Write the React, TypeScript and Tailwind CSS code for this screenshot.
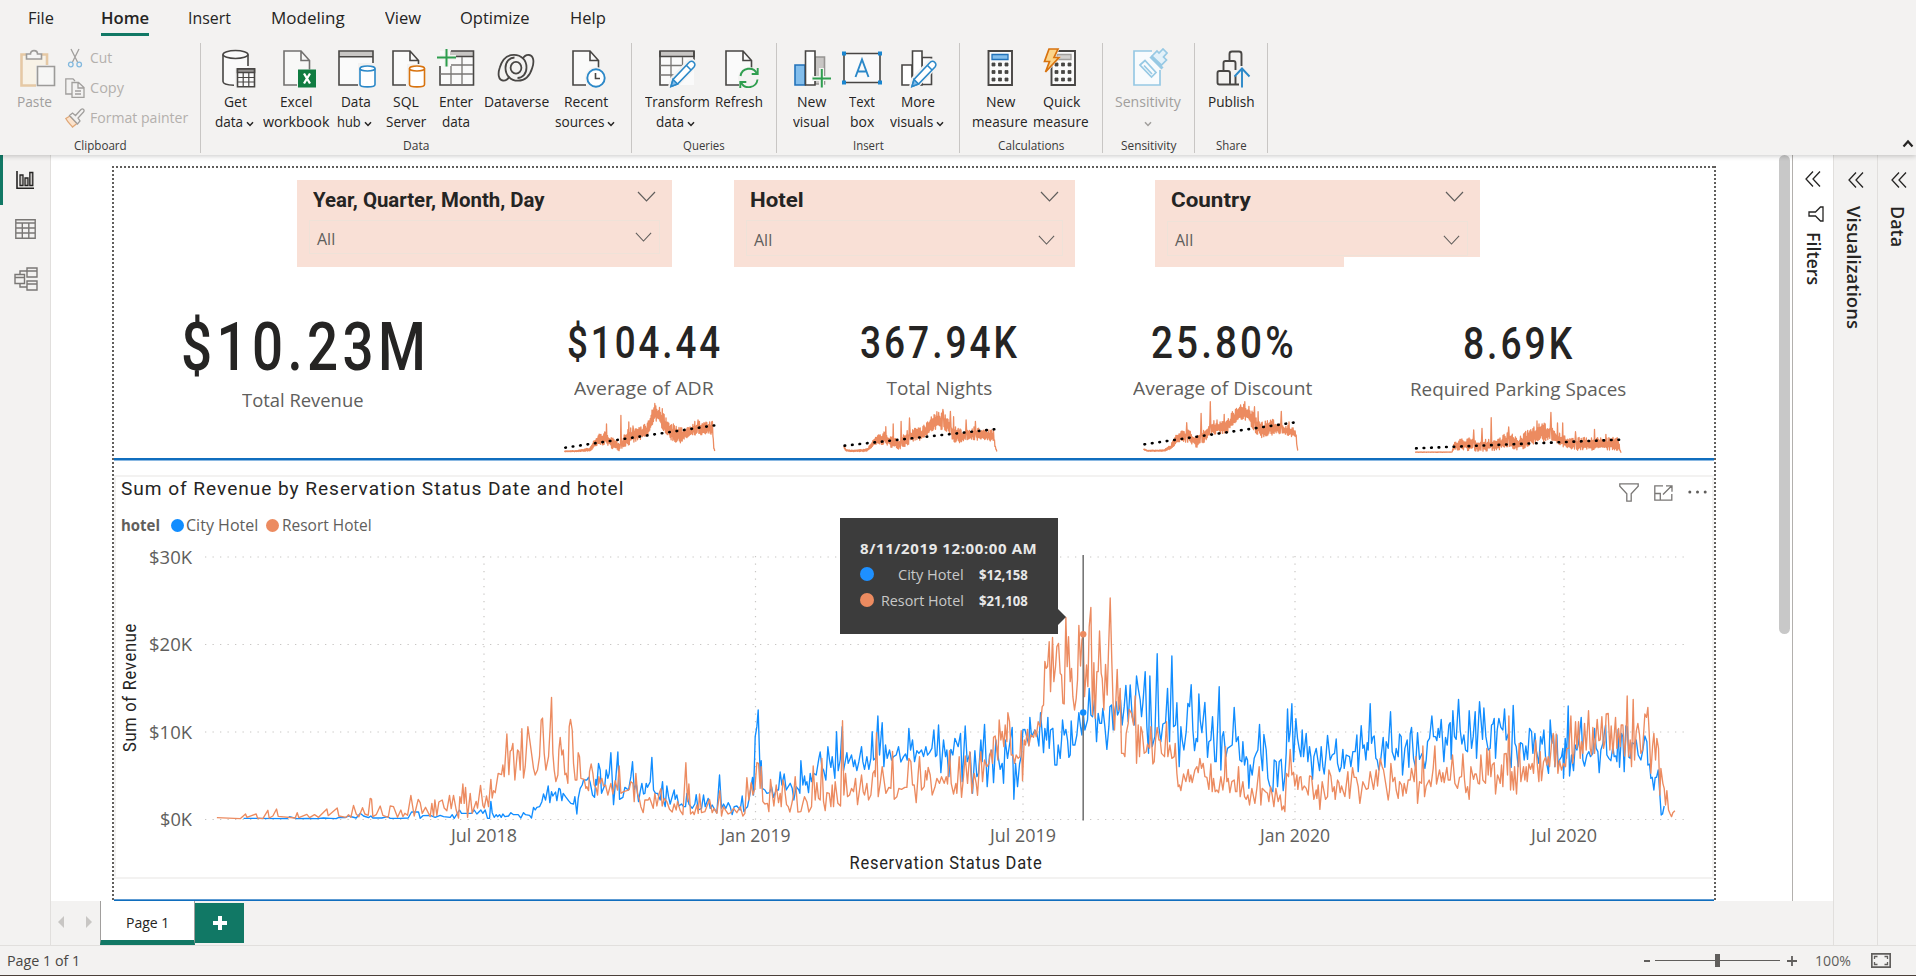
import { useLayoutEffect, useRef, useState } from "react";
import type { ReactNode } from "react";

const UI = "font-['Open_Sans','Noto_Sans',sans-serif]";
const DIN = "font-[Roboto,'Liberation_Sans',sans-serif]";

/* One line of text, condensed or widened so that it fills the width of its box. */
function Fit({ className, children }: { className: string; children: string }) {
  const box = useRef<HTMLSpanElement>(null);
  const inner = useRef<HTMLSpanElement>(null);
  const [scale, setScale] = useState(1);
  useLayoutEffect(() => {
    if (box.current && inner.current && inner.current.offsetWidth) {
      setScale(box.current.clientWidth / inner.current.offsetWidth);
    }
  }, [children]);
  return (
    <span ref={box} className={`block shrink-0 text-left ${className}`}>
      <span
        ref={inner}
        className="inline-block origin-left whitespace-nowrap"
        style={{ transform: `scaleX(${scale})` }}
      >
        {children}
      </span>
    </span>
  );
}

/* ---------- ribbon icons ---------- */
const D = "#484644";

function Box({ children, faded }: { children: ReactNode; faded?: boolean }) {
  return (
    <svg viewBox="0 0 40 40" className={faded ? "size-10 opacity-50" : "size-10"} fill="none" stroke={D} strokeWidth="1.6">
      {children}
    </svg>
  );
}
const Cylinder = ({ x, y, w, h, c }: { x: number; y: number; w: number; h: number; c: string }) => (
  <g stroke={c}>
    <path d={`M${x} ${y + 2.5}v${h - 5}c0 3.2 ${w} 3.2 ${w} 0v${-(h - 5)}`} fill="#fff" />
    <ellipse cx={x + w / 2} cy={y + 2.5} rx={w / 2} ry="2.5" fill="#fff" />
  </g>
);
const Sheet = ({ x = 0 }: { x?: number }) => (
  <g>
    <path d={`M${x + 7} 3h17l9 9v25h-26z`} fill="#fafafa" stroke="none" />
    <path d={`M${x + 20} 37h-13v-34h17l8.500 9.500v9M${x + 24} 3v9.500h8.500`} />
  </g>
);
const Pencil = () => (
  <g>
    <path d="M13 39l2-8 16-17a3.500 3.500 0 0 1 6 5L20 37z" fill="#fff" stroke="#f3f2f1" strokeWidth="4" />
    <path d="M14 38.500l2-7 16-17a3.200 3.200 0 0 1 5 4.500L20.500 36z" fill="#fff" stroke="#2b88c8" />
    <path d="M14 38.500l2-7 4.500 4.500z" fill="#83beec" stroke="#2b88c8" />
    <path d="M29.500 17.500l4.500 4.500" stroke="#2b88c8" />
  </g>
);

const PasteIcon = () => (
  <Box faded>
    <path d="M9 6.500H4.500v31H19M25 6.500h5V17" stroke="#dba15a" strokeWidth="2.600" />
    <path d="M6 8h22v9h-9v19H6z" fill="#fdf3dc" stroke="none" />
    <path d="M9.500 11V6h4c0-4.500 7-4.500 7 0h4v5z" fill="#f8f8f8" />
    <path d="M20.500 18.500h17v19h-17z" fill="#fafafa" />
  </Box>
);
const GetDataIcon = () => (
  <Box>
    <path d="M7 6.500v27c0 2 5 3.800 12 3.800V20h13V6.500z" fill="#fafafa" stroke="none" />
    <path d="M7 6.500v27c0 2 4 3.500 11 3.800M32 6.500V18" />
    <ellipse cx="19.500" cy="6.500" rx="12.500" ry="4" fill="#fafafa" />
    <path d="M21.500 20.800h17v18h-17z" fill="#fafafa" />
    <path d="M21.500 21h17v3.500h-17z" fill="#979593" />
    <path d="M21.500 29.500h17M21.500 34h17M27.200 24.500v14M32.800 24.500v14" strokeWidth="1.200" />
  </Box>
);
const ExcelIcon = () => (
  <Box>
    <g opacity="0.75"><Sheet x={1} /></g>
    <path d="M22 21.500h18v18H22z" fill="#107c41" stroke="none" />
    <path d="M28 25.500l6 10M34 25.500l-6 10" stroke="#fff" strokeWidth="2.300" />
  </Box>
);
const DataHubIcon = () => (
  <Box>
    <path d="M3 3h34v34H3z" fill="#fafafa" stroke="none" />
    <path d="M3 3.500h34v5H3z" fill="#c8c6c4" stroke="none" />
    <path d="M22 37H3V3h34v12M3 8.800h34" />
    <path d="M22 15h19v26H22z" fill="#f3f2f1" stroke="none" />
    <Cylinder x={24} y={18} w={15} h={21} c="#2b88c8" />
  </Box>
);
const SqlIcon = () => (
  <Box>
    <Sheet />
    <path d="M21 16h19v25H21z" fill="#f3f2f1" stroke="none" />
    <Cylinder x={23.500} y={18} w={15} h={21} c="#d8730f" />
  </Box>
);
const EnterDataIcon = () => (
  <Box>
    <path d="M4 3h34v34H4z" fill="#fafafa" stroke="none" />
    <path d="M14 3h24v5H14z" fill="#c8c6c4" stroke="none" />
    <path d="M15 3h22.500v34H4V18M18 8.500h19.500" />
    <path d="M4 26h33M15 17h22M15 18v19M26 9v28" stroke="#797775" strokeWidth="1.300" />
    <path d="M1 9.500h19M10.500 0v19" stroke="#f3f2f1" strokeWidth="5" />
    <path d="M1 9.500h19M10.500 1v17.500" stroke="#2f9e4f" strokeWidth="2" />
  </Box>
);
const DataverseIcon = () => (
  <Box>
    <g strokeWidth="1.800">
      <path d="M13.500 28.500C12 31 9.500 32.800 7 32.500 2.500 32 1.500 26 3.800 19.500 6 12 11 6.800 18 6.800c7.500 0 12.500 5.500 12.500 12.700 0 6.500-4 10.500-9 10.500" />
      <path d="M26.500 11C28 8.500 30.500 6.700 33 7c4.500.5 5.500 6.500 3.200 13C34 27.500 29 32.700 22 32.700 14.500 32.700 9.500 27.200 9.500 20c0-6.500 4-10.500 9-10.500" />
      <ellipse cx="20" cy="19.700" rx="5.400" ry="5.900" />
    </g>
  </Box>
);
const RecentIcon = () => (
  <Box>
    <Sheet />
    <circle cx="30" cy="30" r="11" fill="#f3f2f1" stroke="none" />
    <circle cx="30" cy="30" r="8.700" fill="#fff" stroke="#2b88c8" strokeWidth="1.900" />
    <path d="M29.500 25v5.500h4.500" />
  </Box>
);
const TransformIcon = () => (
  <Box>
    <path d="M3 3h34v34H3z" fill="#fafafa" stroke="none" />
    <path d="M3 3h34v5.500H3z" fill="#c8c6c4" />
    <path d="M3 3v34h12M37 3v11" />
    <path d="M3 17.500h30M3 27h20M14 9v25M25.500 9v14" stroke="#797775" strokeWidth="1.300" />
    <Pencil />
  </Box>
);
const RefreshIcon = () => (
  <Box>
    <Sheet />
    <circle cx="30" cy="30" r="11" fill="#f3f2f1" stroke="none" />
    <g stroke="#2f9e4f" strokeWidth="1.900">
      <path d="M21.500 28a8.800 8.800 0 0 1 16.500-2.500M38.500 31.500A8.800 8.800 0 0 1 22 34.500" />
      <path d="M38.700 20v6h-6M21.300 40v-6h6" />
    </g>
  </Box>
);
const NewVisualIcon = () => (
  <Box>
    <path d="M24 9h9.500v27H24z" fill="#c8c6c4" stroke="#979593" />
    <path d="M4 17h10v20H4z" fill="#83beec" stroke="#2272b9" />
    <path d="M14.500 3h9.500v34h-9.500z" fill="#fff" />
    <path d="M21 30.500h19M30.500 20v19" stroke="#f3f2f1" strokeWidth="5" />
    <path d="M21.500 30.500h18.500M30.800 21v18.500" stroke="#2f9e4f" strokeWidth="2" />
  </Box>
);
const TextBoxIcon = () => (
  <Box>
    <path d="M2 5.500h36v29H2z" fill="#fafafa" />
    <path d="M13.500 29L20 11.500 26.500 29M15.500 23.500h9" stroke="#2b88c8" strokeWidth="1.900" />
    <path d="M0 3.500h4v4H0zM36 3.500h4v4h-4zM0 32.500h4v4H0zM36 32.500h4v4h-4z" fill="#1a86d0" stroke="none" />
  </Box>
);
const MoreVisualsIcon = () => (
  <Box>
    <path d="M24 9.500h9.500v27H24z" fill="#fafafa" />
    <path d="M4 17h10v20H4z" fill="#fff" />
    <path d="M14.500 3h9.500v34h-9.500z" fill="#fff" />
    <Pencil />
  </Box>
);
const Keys = () => (
  <path d="M12 15h3v3h-3zM18.500 15h3v3h-3zM25 15h3v3h-3zM12 22.500h3v3h-3zM18.500 22.500h3v3h-3zM25 22.500h3v3h-3zM12 30h3v3h-3zM18.500 30h3v3h-3zM25 30h3v3h-3z" fill={D} stroke={D} strokeWidth="0.800" />
);
const NewMeasureIcon = () => (
  <Box>
    <path d="M8.500 3h23.500v34H8.500z" fill="#fafafa" strokeWidth="1.900" />
    <path d="M12 6.500h16v5H12z" fill="#83beec" stroke="#2272b9" strokeWidth="1.300" />
    <Keys />
  </Box>
);
const QuickMeasureIcon = () => (
  <Box>
    <g transform="translate(2 0)">
      <path d="M8.500 3h23.500v34H8.500z" fill="#fafafa" strokeWidth="1.900" />
      <path d="M14 6.500h14v5H14z" fill="#d2d0ce" stroke="#a19f9d" strokeWidth="1.300" />
      <Keys />
    </g>
    <path d="M6 0h13l-4 8.500h5L5 26l3-11H0z" fill="#f3f2f1" stroke="none" />
    <path d="M8 1h9l-4 8.500h5L4.500 24l4-10.500H3.500z" fill="#fcd58a" stroke="#d8730f" strokeWidth="1.700" />
  </Box>
);
const SensitivityIcon = () => (
  <Box>
    <g stroke="#97c9e4" strokeWidth="1.700">
      <path d="M32 22v15H6V3h18" fill="#f8fbfd" />
      <path d="M24 8l5-5 2 2 4-4 4 4-3.500 4 3 3-5 5z" fill="#e3f1f9" />
      <path d="M22.500 8.500l12 12" strokeWidth="3" />
      <path d="M12 17l5-4.500L28 24.500 23.500 29z" />
      <path d="M16 17.500l8 8.500" />
    </g>
  </Box>
);
const PublishIcon = () => (
  <Box>
    <g strokeWidth="1.900">
      <path d="M30.500 18V6a2.500 2.500 0 0 0-2.500-2.500h-7A2.500 2.500 0 0 0 18.500 6v7" />
      <path d="M24.500 22v-7a2 2 0 0 0-2-2h-8a2 2 0 0 0-2 2v7.500" />
      <path d="M19 36.500V25a2 2 0 0 0-2-2H8.500a2 2 0 0 0-2 2v9.500a2 2 0 0 0 2 2H28M24.500 28v8.500" />
    </g>
    <path d="M31 39.500V21M23.500 28.500l7.500-8 7.500 8" stroke="#2b88c8" strokeWidth="1.900" />
  </Box>
);

const Caret = ({ className = "" }: { className?: string }) => (
  <svg viewBox="0 0 8 6" className={`h-[6px] w-2 shrink-0 ${className}`} fill="none" stroke="currentColor" strokeWidth="1.500">
    <path d="M1 1.200L4 4.400 7 1.200" />
  </svg>
);

function Tool({ className, icon, a, aw, b, bw, caret, off }: {
  className: string; icon: ReactNode; a: string; aw: string; b?: string; bw?: string; caret?: boolean; off?: boolean;
}) {
  return (
    <div className={`flex shrink-0 flex-col items-center ${off ? "text-[#a19f9d]" : "text-[#252423]"} ${className}`}>
      {icon}
      <div className="mt-1 flex h-10 flex-col items-center text-[14.5px] leading-5">
        <Fit className={aw}>{a}</Fit>
        <div className="flex h-5 items-center gap-[3px]">
          {b && <Fit className={bw ?? ""}>{b}</Fit>}
          {caret && <Caret className={b ? "mt-1 mr-[3px]" : "mt-1"} />}
        </div>
      </div>
    </div>
  );
}

function Group({ className, pad = "", label, lw, children }: { className: string; pad?: string; label: string; lw: string; children: ReactNode }) {
  return (
    <div className={`flex h-[110px] shrink-0 flex-col border-r border-[#c8c6c4] pt-[5px] ${className}`}>
      <div className={`flex h-[91px] shrink-0 ${pad}`}>{children}</div>
      <div className="flex shrink-0 justify-center text-[12.5px] leading-[14px] text-[#3b3a39]"><Fit className={lw}>{label}</Fit></div>
    </div>
  );
}

function Ribbon() {
  return (
    <header className="relative z-10 flex h-[155px] shrink-0 flex-col bg-[#f3f2f1] shadow-[0_1px_5px_rgba(0,0,0,0.22)]">
      <nav className="flex h-[43px] pl-7 text-[17px] leading-9 text-[#252423]">
        <Fit className="w-[26px]">File</Fit>
        <div className="ml-[47px] flex flex-col">
          <Fit className="h-[33px] w-12 font-semibold">Home</Fit>
          <div className="h-[3px] bg-[#117865]" />
        </div>
        <Fit className="ml-[39px] w-[43px]">Insert</Fit>
        <Fit className="ml-10 w-[74px]">Modeling</Fit>
        <Fit className="ml-10 w-[36px]">View</Fit>
        <Fit className="ml-[39px] w-[70px]">Optimize</Fit>
        <Fit className="ml-10 w-[36px]">Help</Fit>
      </nav>
      <div className="flex">
        <Group className="w-[201px]" label="Clipboard" lw="w-[53px]">
          <div className="ml-[17px] flex w-10 flex-col text-[14.5px] leading-5 text-[#a19f9d]">
            <PasteIcon />
            <Fit className="mt-1 w-[35px]">Paste</Fit>
          </div>
          <div className="ml-2 flex flex-col text-[14.5px] text-[#b3b0ad]">
            <div className="flex h-5 items-center">
              <svg viewBox="0 0 20 20" className="size-5" fill="none" stroke="#a19f9d" strokeWidth="1.300">
                <path d="M6 1l6.500 13M14 1L7.500 14" />
                <circle cx="5.800" cy="16.500" r="2.300" stroke="#83b9de" /><circle cx="14.200" cy="16.500" r="2.300" stroke="#83b9de" />
              </svg>
              <Fit className="ml-[5px] w-[22px] leading-5">Cut</Fit>
            </div>
            <div className="mt-[10px] flex h-5 items-center">
              <svg viewBox="0 0 20 20" className="size-5" fill="none" stroke="#a19f9d" strokeWidth="1.300">
                <path d="M7 16H.8V.8H8L10 3M7 4.500h6.500l5.500 5v9.800H7zM13 4.500V10h6M10 13h6M10 16h6" />
              </svg>
              <Fit className="ml-[5px] w-[34px] leading-5">Copy</Fit>
            </div>
            <div className="mt-[10px] flex h-5 items-center">
              <svg viewBox="0 0 20 20" className="size-5" fill="none" stroke="#a19f9d" strokeWidth="1.300">
                <path d="M5 8l7 7.500-4.500 3.500C5 16 3 14.500.800 10.500z" fill="#fbe3cd" stroke="#e0a878" />
                <path d="M4.500 7.500l3-2.500 3 2.500L16 1.500c2-1.500 4 .5 2.500 2.500L13 10l2 3-2.500 3z" fill="#f3f2f1" />
              </svg>
              <Fit className="ml-[5px] w-[98px] leading-5">Format painter</Fit>
            </div>
          </div>
        </Group>
        <Group className="w-[431px]" pad="pl-2" label="Data" lw="w-[26px]">
          <Tool className="w-[53px]" icon={<GetDataIcon />} a="Get" aw="w-[23px]" b="data" bw="w-[28px]" caret />
          <Tool className="w-[68px]" icon={<ExcelIcon />} a="Excel" aw="w-[32px]" b="workbook" bw="w-[66px]" />
          <Tool className="w-[52px]" icon={<DataHubIcon />} a="Data" aw="w-[30px]" b="hub" bw="w-[24px]" caret />
          <Tool className="w-[48px]" icon={<SqlIcon />} a="SQL" aw="w-[26px]" b="Server" bw="w-[40px]" />
          <Tool className="w-[51px]" icon={<EnterDataIcon />} a="Enter" aw="w-[34px]" b="data" bw="w-[28px]" />
          <Tool className="w-[70px]" icon={<DataverseIcon />} a="Dataverse" aw="w-[65px]" />
          <Tool className="w-[70px]" icon={<RecentIcon />} a="Recent" aw="w-[44px]" b="sources" bw="w-[49px]" caret />
        </Group>
        <Group className="w-[145px]" pad="pl-[10px]" label="Queries" lw="w-[42px]">
          <Tool className="w-[70px]" icon={<TransformIcon />} a="Transform" aw="w-[65px]" b="data" bw="w-[28px]" caret />
          <Tool className="w-[54px]" icon={<RefreshIcon />} a="Refresh" aw="w-[48px]" />
        </Group>
        <Group className="w-[183px]" pad="pl-[12px]" label="Insert" lw="w-[31px]">
          <Tool className="w-[44px]" icon={<NewVisualIcon />} a="New" aw="w-[29px]" b="visual" bw="w-[36px]" />
          <Tool className="ml-[7px] w-[44px]" icon={<TextBoxIcon />} a="Text" aw="w-[26px]" b="box" bw="w-[24px]" />
          <Tool className="w-[68px]" icon={<MoreVisualsIcon />} a="More" aw="w-[34px]" b="visuals" bw="w-[43px]" caret />
        </Group>
        <Group className="w-[143px]" pad="pl-[10px]" label="Calculations" lw="w-[66px]">
          <Tool className="w-[60px]" icon={<NewMeasureIcon />} a="New" aw="w-[29px]" b="measure" bw="w-[56px]" />
          <Tool className="w-[62px]" icon={<QuickMeasureIcon />} a="Quick" aw="w-[37px]" b="measure" bw="w-[56px]" />
        </Group>
        <Group className="w-[92px]" pad="pl-[9px]" label="Sensitivity" lw="w-[55px]">
          <Tool className="w-[72px]" off icon={<SensitivityIcon />} a="Sensitivity" aw="w-[66px]" caret />
        </Group>
        <Group className="w-[73px]" pad="pl-[9px]" label="Share" lw="w-[31px]">
          <Tool className="w-[54px]" icon={<PublishIcon />} a="Publish" aw="w-[47px]" />
        </Group>
        <div className="flex flex-1 items-end justify-end pr-[2px] pb-[3px]">
          <svg viewBox="0 0 12 9" className="mb-[2px] h-[9px] w-3" fill="none" stroke="#252423" strokeWidth="2.200"><path d="M1.500 7.500L6 2.500l4.500 5" /></svg>
        </div>
      </div>
    </header>
  );
}

/* ---------- left navigation ---------- */
function ViewNav() {
  return (
    <nav className="flex w-[51px] shrink-0 flex-col border-r border-[#e1dfdd] bg-[#f3f2f1]">
      <div className="flex h-[50px] items-center border-l-[3px] border-[#117865] pl-[13px]">
        <svg viewBox="0 0 18 18" className="size-[18px]" fill="none" stroke="#252423" strokeWidth="1.300">
          <path d="M1 0v17.200h17" strokeWidth="1.600" />
          <path d="M4 4h3v10.500H4zM9 7h3v7.500H9zM13.800 1.500h3v13h-3z" fill="#c8c6c4" />
        </svg>
      </div>
      <div className="flex h-12 items-center pl-[15px]">
        <svg viewBox="0 0 21 20" className="h-5 w-[21px]" fill="none" stroke="#797775" strokeWidth="1.400">
          <path d="M.8.8h19.400v18.400H.8zM.8 4h19.400M.8 9h19.400M.8 14h19.400M7.300 4v15M13.800 4v15" />
        </svg>
      </div>
      <div className="mt-[2px] flex h-12 items-center pl-[14px]">
        <svg viewBox="0 0 24 24" className="size-6" fill="none" stroke="#797775" strokeWidth="1.400">
          <path d="M13 1h10v9H13zM13 4h10M13 14h10v9H13zM13 17h10M1 7.500h9.500v9H1zM1 10.500h9.500M6 7.500V4h7M6 16.500V20h7" />
        </svg>
      </div>
    </nav>
  );
}

/* ---------- slicers ---------- */
const Chevron = ({ className = "" }: { className?: string }) => (
  <svg viewBox="0 0 19 11" className={`shrink-0 ${className}`} fill="none" stroke="#605e5c" strokeWidth="1.200"><path d="M1 1l8.500 9L18 1" /></svg>
);

function Slicer({ className, title, tw, body, drop }: { className: string; title: string; tw: string; body: string; drop: string }) {
  return (
    <div className={`shrink-0 ${className}`}>
      <div className="flex h-10 items-start justify-between pt-1 pl-4">
        <Fit className={`${DIN} text-[21px] font-bold leading-[33px] text-[#252423] ${tw}`}>{title}</Fit>
        <Chevron className="mt-[7px] mr-[16px] h-[11px] w-[19px]" />
      </div>
      <div className={`ml-3 flex items-center justify-between border border-[#efe2d8] pl-[7px] ${body}`}>
        <Fit className="w-[18px] pt-[3px] text-[16px] leading-6 text-[#605e5c]">All</Fit>
        <Chevron className={`h-[10px] w-[17px] ${drop}`} />
      </div>
    </div>
  );
}

/* ---------- KPI sparklines ---------- */
type Spark = { x0: number; ox: number; k: number; band: number[][]; peaks: number[][]; trend: number[] };

const SPARKS: Record<string, Spark> = {
  adr: {
    x0: 539, ox: 540, k: 2.8,
    band: [[68,453,455],[100,452,455],[140,445,453],[150,425,445],[165,405,435],[185,400,430],[205,420,445],[222,430,450],[240,400,435],[255,390,430],[275,385,420],[300,375,410],[312,345,385],[320,312,355],[335,330,370],[350,355,395],[365,375,415],[380,385,425],[395,390,425],[410,385,415],[430,370,405],[450,370,410],[470,370,400],[483,370,400],[487,445,450],[490,453,455]],
    peaks: [[186,372],[226,346],[248,366],[260,378],[342,326],[373,372],[442,360]],
    trend: [68,443,490,376],
  },
  nights: {
    x0: 835, ox: 540, k: 2.8,
    band: [[850,435,440],[856,448,453],[870,451,455],[915,448,454],[925,435,445],[940,410,435],[965,400,430],[985,415,440],[1005,420,445],[1025,400,435],[1050,385,420],[1070,385,420],[1090,365,400],[1105,345,385],[1130,345,385],[1145,360,400],[1160,385,425],[1180,395,425],[1210,385,420],[1240,392,420],[1270,395,420],[1275,440,445],[1279,453,455]],
    peaks: [[968,380],[988,372],[1010,364],[1034,354],[1110,335],[1127,328],[1148,334],[1157,350],[1193,360],[1218,364]],
    trend: [850,437,1279,387],
  },
  discount: {
    x0: 1117, ox: 1100, k: 2.529,
    band: [[110,446,449],[120,451,454],[160,450,454],[178,438,448],[190,410,435],[205,395,425],[225,395,425],[245,415,440],[262,390,425],[280,370,400],[300,365,400],[320,365,400],[335,340,380],[350,325,360],[365,315,355],[380,330,370],[395,360,400],[410,370,410],[440,365,400],[470,378,405],[495,390,412],[499,445,450],[502,453,455]],
    peaks: [[218,368],[255,340],[278,305],[313,343],[365,305],[390,320],[399,335],[458,334],[477,366]],
    trend: [110,433,494,367],
  },
  parking: {
    x0: 1414, ox: 1100, k: 2.529,
    band: [[797,453,454],[890,453,454],[896,425,445],[920,415,445],[960,420,448],[1000,420,448],[1030,400,440],[1060,415,445],[1090,385,430],[1110,375,415],[1140,375,420],[1160,400,430],[1185,415,445],[1230,415,445],[1312,415,445],[1316,450,454],[1319,453,454]],
    peaks: [[945,387],[965,382],[989,350],[1033,378],[1105,360],[1139,334],[1156,366],[1170,366],[1202,392],[1250,385],[1278,400]],
    trend: [797,442,1316,416],
  },
};

function sparkPoints({ ox, k, band, peaks }: Spark) {
  const pts: string[] = [];
  let seed = 7;
  const rnd = () => ((seed = (seed * 16807) % 2147483647) / 2147483647);
  let i = 0;
  let p = 0;
  for (let x = band[0][0]; x <= band[band.length - 1][0]; x += 1.3) {
    while (i < band.length - 2 && x > band[i + 1][0]) i++;
    const [x1, a1, b1] = band[i];
    const [x2, a2, b2] = band[i + 1];
    const t = (x - x1) / (x2 - x1);
    const top = a1 + (a2 - a1) * t;
    const bottom = b1 + (b2 - b1) * t;
    const spread = bottom - top;
    let y = pts.length % 2 ? top + spread * (rnd() * 0.5 - 0.2) : bottom - spread * (rnd() * 0.4 - 0.1);
    if (p < peaks.length && x >= peaks[p][0]) y = peaks[p++][1];
    pts.push(`${(ox + x / k).toFixed(1)},${(300 + Math.min(y, 455) / 3).toFixed(1)}`);
  }
  return pts.join(" ");
}

function Sparkline({ id }: { id: string }) {
  const s = SPARKS[id];
  const [tx1, ty1, tx2, ty2] = s.trend;
  return (
    <svg viewBox={`${s.x0} 400 210 54`} className="h-[54px] w-[210px]" fill="none">
      <polyline points={sparkPoints(s)} stroke="#ec8b60" strokeWidth="1.300" strokeLinejoin="round" />
      <line x1={s.ox + tx1 / s.k + 1} y1={300 + ty1 / 3} x2={s.ox + tx2 / s.k} y2={300 + ty2 / 3} stroke="#000" strokeWidth="2.600" strokeLinecap="round" strokeDasharray="0.600 6.900" />
    </svg>
  );
}

function Kpi({ className, value, vw, label, lw, spark }: { className: string; value: string; vw: string; label: string; lw: string; spark?: string }) {
  return (
    <div className={`flex shrink-0 flex-col items-center ${className}`}>
      <Fit className={`${DIN} font-medium tracking-[0.08em] text-[#252423] ${vw}`}>{value}</Fit>
      <Fit className={`text-[19px] leading-6 text-[#605e5c] ${lw}`}>{label}</Fit>
      {spark && <Sparkline id={spark} />}
    </div>
  );
}

/* ---------- revenue chart ---------- */
/* Each trace is stored in thirds of a pixel, relative to the origin of its stretch of the time axis. */
type Trace = [number, number, string];

const RESORT: Trace[] = [
  [100, 460, "350,1073 420,1076 436,1062 440,1072 468,1062 472,1074 488,1076 503,1051 507,1074 518,1068 529,1047 534,1069 585,1074 591,1058 596,1073 620,1063 628,1073 643,1064 655,1072 680,1047 684,1067 711,1044 716,1068 738,1072 745,1064 752,1072 760,1036 768,1062 776,1070 787,1043 794,1062 804,1066 810,1015 814,1017 818,1070 828,1064 840,1038 848,1066 864,1072 870,1038 880,1040 892,1072 902,1050 908,1070 914,1060 922,1066 932,1006 942,1068 954,1018 960,1028 966,1060 976,1042 990,1070 995,1030 1000,1068 1004,1020 1010,1066 1016,1026 1026,1020 1032,1044 1040,1052 1048,1006 1053,1046 1060,1006 1068,1050 1075,1074 1079,1010 1083,1030 1088,972 1092,1030 1096,982 1102,1072 1110,1000 1116,1060 1128,1024 1132,1044 1141,976 1148,1036 1152,1044 1159,1008 1165,1040 1172,958 1176,1014 1180,992 1185,998 1194,940 1204,944 1208,915 1212,950 1220,822 1226,944 1230,874 1234,870 1238,850 1244,960 1252,870 1256,875 1260,930 1265,806 1270,954 1275,920 1283,800 1290,850 1300,925 1305,945 1312,930 1318,890 1323,780 1327,774 1332,880 1337,930 1345,890 1350,800 1354,712 1358,880 1362,930 1367,965 1373,945 1376,870 1380,832 1385,885 1389,870 1394,944 1398,940 1403,970 1407,800 1411,778 1416,810 1420,910 1425,960 1430,960 1434,878 1438,890 1442,955 1452,958 1457,985 1460,980 1465,992 1468,935 1473,912 1478,940 1482,975 1488,985 1492,1005 1496,950"],
  [560, 500, "120,850 125,835 130,858 136,855 143,885 152,850 158,882 165,842 172,870 177,798 182,880 190,875 200,872 207,868 212,845 218,850 222,905 227,820 232,880 238,900 242,920 249,938 254,900 264,900 268,893 274,910 279,925 284,880 290,918 297,880 302,866 306,918 312,895 320,905 328,928 336,936 342,912 348,930 352,905 360,932 368,944 377,788 382,905 386,852 391,942 398,935 402,944 410,915 414,940 418,882 424,938 434,935 448,898 456,938 462,925 470,940 479,872 484,948 490,920 497,932 504,942 512,938 520,925 530,938 540,920 548,948 554,940 560,833 566,900 573,848 578,885 584,865 590,788 595,790 600,865 603,800 608,905 614,912 622,910 626,935 631,838 636,880 641,918 648,855 655,908 660,880 663,920 668,840 672,855 679,914 684,920 689,936 695,910 700,885 705,830 713,936 722,935 729,905 733,890 740,905 746,936 754,920 759,798 765,900 770,848 775,895 780,900 785,775 790,905 795,932 800,878 807,880 812,920 816,855 820,920 825,845 833,910 841,918 847,662 851,885 856,820 862,890 868,885 874,865 880,875 886,835 892,914 898,870 904,825 909,875 913,885 920,850 925,900 932,885 938,820 943,812 945,830 949,698 954,890 960,850 966,800 970,830 977,880 986,862 992,865 997,754 1002,898 1010,890 1016,865 1024,868 1034,862 1040,862 1046,775 1052,785 1057,855 1062,855 1068,908 1074,820 1078,770 1084,870 1092,860 1096,812 1100,840 1104,802 1110,825 1116,885 1124,862 1130,835 1138,850 1144,830 1152,850 1158,830 1162,852 1168,752 1173,850 1180,882 1187,850 1190,880 1197,770 1204,892 1210,830 1215,768 1222,850 1229,755 1235,880 1242,820 1248,850 1252,886 1258,790 1262,755 1267,845 1273,780 1280,800 1286,790 1292,750 1297,790 1300,712 1305,708 1309,740 1313,780 1317,660 1322,720 1326,694 1331,740 1335,675 1340,725 1343,638 1348,665 1353,765 1358,765 1363,790 1368,765 1374,775 1379,770 1383,692 1387,842 1392,720 1396,735 1402,688 1406,738 1412,705 1420,712 1424,690 1428,710 1434,665 1440,680 1446,620 1450,615 1454,484 1458,505 1462,500 1467,425 1471,575 1477,412 1481,545 1486,500 1490,440 1495,430"],
  [1000, 540, "180,400 184,405 188,490 192,492 197,232 201,380 205,290 210,425 214,385 218,470 223,510 228,475 232,420 236,256 241,378 245,300 249,283 253,470 259,375 263,440 267,260 272,202 277,525 281,368 285,535 290,395 294,395 298,273 303,400 306,415 311,510 316,373 321,465 325,330 330,174 335,370 339,500 343,570 347,480 351,388 355,510 360,445 364,640 370,640 374,650 378,580 384,550 387,508 394,520 400,555 405,468 409,670 414,555 418,650 422,560 426,575 432,640 438,635 442,612 448,625 452,560 458,672 462,665 466,600 471,562 476,600 480,600 484,640 493,650 499,545 503,650 509,615 515,655 522,650 525,610 530,700 534,740 538,735 542,752 550,702 557,725 564,688 568,725 572,705 576,728 584,690 590,680 594,698 599,655 604,685 609,670 614,710 620,712 626,748 632,672 636,755 640,715 645,755 650,750 655,758 662,710 668,750 673,710 676,620 680,725 684,715 689,758 695,725 702,720 706,755 710,755 715,680 720,770 728,725 733,770 738,778 743,765 748,795 755,745 764,790 770,745 777,680 782,795 786,745 796,755 802,760 806,785 811,740 816,765 821,800 827,745 834,785 840,765 845,810 850,798 854,815 859,700 865,710 870,628 875,705 880,697 884,738 890,705 893,748 898,712 902,710 906,750 912,738 918,745 924,765 928,708 934,710 941,778 948,750 950,775 954,735 959,808 966,725 976,778 982,770 986,690 992,708 997,755 1002,740 1005,778 1012,720 1016,728 1020,758 1024,738 1034,770 1043,695 1048,775 1057,683 1062,712 1068,712 1074,740 1079,790 1088,725 1098,748 1104,745 1110,695 1120,748 1128,690 1132,738"],
  [1360, 640, "60,355 66,380 70,390 78,440 84,480 88,450 92,370 98,425 104,412 108,450 114,475 118,425 124,435 128,468 132,430 138,460 144,420 150,420 154,385 162,425 167,350 172,490 178,425 184,430 188,318 193,470 198,438 207,420 212,440 219,385 224,318 229,432 238,390 244,425 248,398 252,428 260,382 264,420 270,420 277,345 284,430 292,445 298,412 304,410 308,342 313,420 317,458 322,440 327,478 332,380 340,418 344,402 348,402 354,430 358,432 362,345 368,420 376,430 380,325 384,405 388,330 392,410 396,375 402,368 406,462 412,405 416,415 420,430 424,375 428,440 432,342 438,340 442,405 446,228 451,450 455,395 460,450 463,380 469,462 477,310 482,425 490,380 494,420 498,380 501,425 506,372 511,388 516,370 520,400 526,300 531,370 536,425 540,335 544,422 550,365 556,352 560,375 564,350 568,380 574,312 579,280 584,380 588,282 593,400 598,362 604,390 610,370 616,380 620,325 626,325 632,228 637,370 641,340 646,245 650,325 655,245 660,355 664,305 668,340 673,250 678,330 685,212 690,325 694,345 698,262 703,340 711,238 716,302 720,300 725,230 730,325 734,305 738,222 744,220 749,330 753,258 758,340 766,232 770,325 775,265 780,320 783,255 788,255 793,348 797,300 801,168 805,350 810,300 814,380 819,178 823,360 828,275 833,250 838,285 842,340 847,330 850,285 854,222 859,232 863,202 868,300 872,400 877,320 881,280 886,360 890,295 895,325 899,465 902,385 908,430 912,445 916,495 920,452 925,510 930,522 934,530 938,518 944,512"],
];

const CITY: Trace[] = [
  [100, 460, "430,1075 560,1076 568,1070 590,1076 620,1075 650,1076 670,1074 690,1075 708,1076 716,1072 735,1073 745,1068 768,1074 780,1060 790,1068 805,1073 812,1068 818,1074 845,1074 862,1070 870,1075 900,1075 924,1074 934,1056 955,1056 960,1075 968,1067 990,1066 1005,1072 1020,1066 1030,1070 1050,1072 1056,1064 1062,1075 1078,1050 1084,1060 1105,1060 1114,1060 1122,1050 1130,1062 1142,1050 1148,1060 1155,1050 1162,1075 1168,1075 1172,1024 1176,1058 1182,1072 1188,1064 1192,1070 1198,1064 1203,1072 1208,1062 1214,1070 1225,1068 1232,1058 1240,1064 1254,1064 1262,1074 1270,1058 1276,1064 1288,1066 1294,1074 1300,1042 1305,1050 1310,1042 1318,1040 1325,1025 1330,1002 1336,1020 1344,978 1349,1028 1354,995 1358,1008 1366,996 1370,1022 1376,985 1380,988 1385,1022 1389,1000 1396,1010 1405,1022 1412,1030 1420,1032 1424,1010 1430,1062 1434,1015 1440,985 1446,975 1450,960 1460,960 1465,952 1470,968 1477,1005 1483,1012 1487,958 1490,975 1495,910"],
  [560, 500, "120,810 124,880 130,865 134,855 138,810 143,835 147,820 152,758 160,914 166,845 173,756 178,898 188,892 194,862 205,870 212,830 217,785 222,870 228,850 235,905 240,875 245,850 250,882 254,880 258,850 262,862 270,845 275,772 280,870 286,880 292,880 300,900 307,845 311,905 315,920 320,858 325,890 330,912 336,890 342,870 345,898 350,885 356,918 364,912 370,920 376,920 380,880 386,912 396,925 404,912 408,884 414,930 424,925 430,885 435,920 444,895 450,925 456,915 464,930 470,938 478,825 484,925 490,912 497,925 504,908 510,920 516,944 522,920 530,918 536,925 540,930 546,888 551,935 557,925 562,920 568,890 577,832 580,885 585,710 590,680 594,630 600,832 603,782 606,865 614,870 620,880 628,878 634,860 640,892 648,870 655,870 660,816 665,855 672,822 678,870 684,860 690,850 696,865 701,900 708,860 716,870 719,880 722,782 728,855 733,828 736,855 740,845 745,878 750,820 754,845 760,820 768,825 776,775 780,756 785,802 790,810 797,840 803,740 808,780 812,802 816,770 824,835 829,695 834,812 840,780 846,680 850,812 856,780 860,758 864,790 874,765 880,800 884,780 890,812 896,785 904,740 908,785 913,808 920,770 926,808 932,775 936,695 940,780 946,775 953,648 958,765 966,668 971,800 976,735 981,775 988,750 994,780 1000,770 1008,765 1015,740 1022,786 1030,770 1036,762 1041,780 1046,685 1051,750 1057,720 1063,785 1070,752 1076,760 1084,750 1090,770 1097,740 1102,765 1108,758 1115,745 1121,690 1126,770 1130,765 1135,675 1142,818 1150,720 1156,770 1160,750 1166,830 1172,748 1178,765 1184,715 1194,740 1201,700 1206,845 1215,678 1221,785 1230,758 1237,880 1244,752 1250,830 1255,820 1262,720 1266,785 1273,673 1281,860 1288,765 1295,750 1300,848 1307,720 1313,765 1320,808 1326,790 1330,850 1335,720 1342,775 1350,720 1356,682 1361,898 1366,790 1372,860 1378,792 1384,765 1388,690 1394,688 1400,712 1406,735 1409,652 1414,710 1424,690 1430,700 1436,738 1441,638 1446,700 1450,758 1454,685 1459,720 1463,652 1467,745 1471,690 1478,685 1484,795 1490,795 1494,735"],
  [1000, 540, "180,655 184,600 187,540 192,585 197,568 202,600 206,652 210,645 213,543 218,615 224,615 230,585 236,518 241,560 245,585 249,518 254,570 262,540 267,445 272,525 277,530 283,480 289,605 294,520 299,550 304,550 308,505 314,560 320,628 326,560 329,500 334,495 339,570 344,510 348,485 352,525 356,515 361,480 366,555 372,500 377,436 384,545 390,435 396,530 402,555 409,408 414,445 420,480 424,530 428,490 435,395 440,560 445,640 449,408 456,620 464,590 471,341 476,560 482,605 488,552 496,548 502,445 508,605 515,348 520,560 526,555 530,488 537,680 542,560 546,600 551,630 558,575 563,490 568,500 573,434 578,570 583,632 588,595 592,605 596,462 600,540 605,578 614,487 622,652 626,605 632,600 637,530 644,665 648,665 657,440 662,690 666,590 670,575 677,650 682,625 696,615 702,502 708,605 714,590 719,660 725,665 728,605 733,675 738,650 742,660 746,745 750,675 756,705 762,655 768,640 773,630 778,553 782,640 787,692 791,583 798,630 803,715 808,735 814,750 818,755 822,660 828,665 832,740 837,665 843,658 849,752 854,710 858,640 862,507 866,605 870,575 875,491 880,665 887,536 892,595 897,625 902,650 906,570 910,650 918,580 923,665 928,620 932,650 937,718 941,650 948,625 953,660 958,692 963,620 968,680 972,702 978,640 982,586 990,660 996,645 1003,640 1008,597 1012,670 1018,695 1023,680 1028,628 1032,685 1038,645 1048,650 1052,680 1058,635 1065,635 1070,585 1074,695 1083,557 1088,625 1092,615 1097,660 1101,608 1104,630 1110,491 1114,610 1118,592 1122,588 1127,655 1131,660"],
  [1360, 640, "56,390 62,355 69,292 74,382 78,305 84,325 91,215 96,335 104,360 108,325 114,350 118,282 123,290 127,405 134,325 141,300 146,382 150,282 154,262 160,355 166,382 172,278 178,358 186,340 194,385 198,360 202,305 208,295 215,228 220,290 226,290 230,302 234,265 238,292 243,238 251,365 256,292 261,315 266,255 270,248 273,358 278,212 283,290 288,298 295,178 300,270 305,312 311,285 316,330 322,335 327,212 334,325 339,290 345,215 349,355 358,185 367,298 371,204 377,290 384,330 390,325 394,255 398,252 402,235 406,355 411,270 416,235 422,262 428,270 433,207 438,300 444,282 448,345 453,382 459,196 464,310 468,320 474,380 481,308 487,312 492,360 497,318 502,358 508,265 514,275 518,340 524,280 528,330 536,370 541,290 546,312 551,270 556,350 565,400 570,240 575,310 580,285 584,380 590,285 594,385 598,360 604,350 608,325 610,415 615,295 619,355 624,198 628,408 634,345 640,392 645,315 650,330 655,310 663,232 668,360 673,378 680,345 686,335 691,350 698,340 703,265 708,325 713,335 717,398 722,330 728,310 736,255 740,345 746,355 752,362 758,320 762,350 767,348 770,365 774,268 778,382 784,280 788,290 792,395 797,258 801,260 806,352 810,355 816,308 822,312 828,300 834,345 842,360 848,330 854,288 860,305 863,375 868,372 872,415 876,412 881,450 885,412 889,412 894,390 899,465 903,525 907,522 912,498"],
];

const tracePoints = (traces: Trace[]) =>
  traces
    .flatMap(([ox, oy, list]) =>
      list.split(" ").map((p) => {
        const [x, y] = p.split(",").map(Number);
        return `${(ox + x / 3 + 0.2).toFixed(2)},${(oy + y / 3).toFixed(2)}`;
      }),
    )
    .join(" ");

const Y_TICKS = [
  { y: 557, label: "$30K", x: 149, w: 43 },
  { y: 644.5, label: "$20K", x: 149, w: 43 },
  { y: 732, label: "$10K", x: 149, w: 43 },
  { y: 819.5, label: "$0K", x: 160, w: 32 },
];
const X_TICKS = [
  { x: 484, label: "Jul 2018", w: 66 },
  { x: 755.5, label: "Jan 2019", w: 70 },
  { x: 1023, label: "Jul 2019", w: 66 },
  { x: 1295, label: "Jan 2020", w: 70 },
  { x: 1564, label: "Jul 2020", w: 66 },
];

function RevenueChart() {
  return (
    <svg viewBox="116 542 1596 334" className="h-[334px] w-[1596px]" fill="none">
      <g stroke="#c8c6c4" strokeWidth="1.200" strokeDasharray="1.300 6.200">
        {Y_TICKS.map((t) => <line key={t.label} x1="205" x2="1685" y1={t.y} y2={t.y} />)}
        {X_TICKS.map((t) => <line key={t.label} x1={t.x} x2={t.x} y1="556" y2="820" />)}
      </g>
      <g className={UI} fontSize="17.500" fill="#605e5c">
        {Y_TICKS.map((t) => (
          <text key={t.label} x={t.x} y={t.y + 6.500} textLength={t.w} lengthAdjust="spacingAndGlyphs">{t.label}</text>
        ))}
        {X_TICKS.map((t) => (
          <text key={t.label} x={t.x - t.w / 2} y="842" textLength={t.w} lengthAdjust="spacingAndGlyphs">{t.label}</text>
        ))}
      </g>
      <g className={DIN} fontSize="17.500" fill="#252423">
        <text x="849.500" y="869" textLength="193" letterSpacing="0.8" lengthAdjust="spacingAndGlyphs">Reservation Status Date</text>
        <text transform="translate(136 752) rotate(-90)" textLength="129" letterSpacing="0.8" lengthAdjust="spacingAndGlyphs">Sum of Revenue</text>
      </g>
      <polyline points={tracePoints(CITY)} stroke="#118dff" strokeWidth="1.350" strokeLinejoin="round" />
      <polyline points={tracePoints(RESORT)} stroke="#ec8b60" strokeWidth="1.350" strokeLinejoin="round" />
      <line x1="1083.200" x2="1083.200" y1="555" y2="820.500" stroke="#777" strokeWidth="1.600" />
      <circle cx="1083.200" cy="634.300" r="3.200" fill="#ec8b60" />
      <circle cx="1083.200" cy="712.500" r="3.200" fill="#118dff" />
    </svg>
  );
}

function Tooltip() {
  return (
    <div className="absolute top-[352px] left-[728px] flex h-[116px] w-[218px] flex-col bg-[#3c3c3c] pt-[19px] pl-5 text-[15px] text-[#e8e8e8]">
      <Fit className="mb-px w-[177px] leading-[22px] font-bold tracking-[0.04em]">8/11/2019 12:00:00 AM</Fit>
      <div className="flex h-[26px] items-center pt-[1px] leading-[22px]">
        <span className="size-[14px] rounded-full bg-[#1e90ff]" />
        <Fit className="ml-[24px] w-[66px] text-[#c8c8c8]">City Hotel</Fit>
        <Fit className="ml-[15px] w-[49px] text-[15px] font-bold">$12,158</Fit>
      </div>
      <div className="flex h-[26px] items-center pt-[1px] leading-[22px]">
        <span className="size-[14px] rounded-full bg-[#ec8b60]" />
        <Fit className="ml-[7px] w-[83px] text-[#c8c8c8]">Resort Hotel</Fit>
        <Fit className="ml-[15px] w-[49px] text-[15px] font-bold">$21,108</Fit>
      </div>
      <svg viewBox="0 0 8 16" className="absolute top-[91px] left-[218px] h-4 w-2"><path d="M0 0l8 8-8 8z" fill="#3c3c3c" /></svg>
    </div>
  );
}

function ChartVisual() {
  return (
    <section className="mx-[2px] mt-[14px] h-[404px] border-2 border-[#f3f2f1] bg-white">
      <div className="flex h-[32px] items-start pl-[5px]">
        <Fit className={`w-[503px] text-[18.5px] leading-[24px] tracking-[0.05em] text-[#252423] ${DIN}`}>Sum of Revenue by Reservation Status Date and hotel</Fit>
        <svg viewBox="0 0 20 19" className="mt-[6px] ml-auto h-[19px] w-5" fill="none" stroke="#797775" strokeWidth="1.300"><path d="M.8.8h18.400v2.500l-7 7.500v7.400H7.800v-7.400l-7-7.500z" /></svg>
        <svg viewBox="0 0 19 16" className="mt-2 ml-[15px] h-4 w-[19px]" fill="none" stroke="#797775" strokeWidth="1.300"><path d="M9 .8H.8v14.400h17V9M.8 8.500h5.500v6.500M9 9.500l8.500-8.500M12 .8h6v6" /></svg>
        <svg viewBox="0 0 19 4" className="mt-[13px] mr-[5px] ml-[15px] h-1 w-[19px]" fill="#605e5c"><circle cx="1.800" cy="2" r="1.500" /><circle cx="9.500" cy="2" r="1.500" /><circle cx="17.200" cy="2" r="1.500" /></svg>
      </div>
      <div className="flex h-[33px] items-center pb-px pl-[5px] text-[16.5px] leading-6 text-[#605e5c]">
        <Fit className="w-[39px] font-bold">hotel</Fit>
        <span className="ml-[11px] size-[13px] rounded-full bg-[#118dff]" />
        <Fit className="ml-[2px] w-[72px]">City Hotel</Fit>
        <span className="ml-[8px] size-[13px] rounded-full bg-[#ec8b60]" />
        <Fit className="ml-[3px] w-[90px]">Resort Hotel</Fit>
      </div>
      <RevenueChart />
    </section>
  );
}

/* ---------- report page ---------- */
function ReportPage() {
  return (
    <div className="relative mt-[11px] ml-[61px] flex h-[735px] w-[1604px] shrink-0 flex-col">
      <div className="absolute inset-x-0 top-0 h-[2px] bg-[repeating-linear-gradient(90deg,#605e5c_0_2px,#fff_2px_4px)]" />
      <div className="absolute inset-y-0 left-0 w-[2px] bg-[repeating-linear-gradient(180deg,#605e5c_0_2px,#fff_2px_4px)]" />
      <div className="absolute inset-y-0 right-0 w-[2px] bg-[repeating-linear-gradient(180deg,#605e5c_0_2px,#fff_2px_4px)]" />
      <div className="flex h-[101px] items-start pt-[14px] pl-[185px]">
        <Slicer className="h-[87px] w-[375px] bg-[#f9e0d6]" title="Year, Quarter, Month, Day" tw="w-[232px]" body="h-[34px] w-[351px]" drop="mr-[7px]" />
        <Slicer className="ml-[62px] h-[87px] w-[341px] bg-[#f9e0d6]" title="Hotel" tw="w-[54px]" body="h-[36px] w-[317px]" drop="mt-[3px] mr-[7px]" />
        <div className="ml-20 flex flex-col">
          <Slicer className="h-[77px] w-[325px] bg-[#f9e0d6]" title="Country" tw="w-[80px]" body="mt-[1px] h-[35px] w-[301px]" drop="mt-[2px] mr-[7px]" />
          <div className="h-[10px] w-[189px] bg-[#f9e0d6]" />
        </div>
      </div>
      <div className="flex h-[191px] items-start">
        <Kpi className="w-[382px] pt-[49px]" value="$10.23M" vw="ml-[4px] w-[249px] text-[67px] leading-[62px]" label="Total Revenue" lw="mt-[10px] w-[122px]" />
        <Kpi className="w-[300px] pt-[51px]" value="$104.44" vw="ml-[2px] w-[156px] text-[44.5px] leading-[50px]" label="Average of ADR" lw="mt-[8px] w-[140px]" spark="adr" />
        <Kpi className="w-[291px] pt-[51px]" value="367.94K" vw="ml-[1px] w-[160px] text-[44.5px] leading-[50px]" label="Total Nights" lw="mt-[8px] w-[106px]" spark="nights" />
        <Kpi className="w-[274px] pt-[51px]" value="25.80%" vw="ml-[3px] w-[146px] text-[44.5px] leading-[50px]" label="Average of Discount" lw="mt-[8px] w-[179px]" spark="discount" />
        <Kpi className="w-[319px] pt-[52px]" value="8.69K" vw="w-[112px] text-[44.5px] leading-[50px]" label="Required Parking Spaces" lw="mt-[8px] mr-[2px] w-[216px]" spark="parking" />
      </div>
      <div className="mx-[2px] h-[3px] shrink-0 border-b border-[#8ab8e2] bg-[#106ebe]" />
      <ChartVisual />
      <div className="mx-[2px] mt-auto h-[2px] shrink-0 border-t border-[#5d9bd3] bg-[#106ebe]" />
      <Tooltip />
    </div>
  );
}

/* ---------- side panes ---------- */
const Expand = () => (
  <svg viewBox="0 0 16 16" className="size-4 shrink-0" fill="none" stroke="#252423" strokeWidth="1.300"><path d="M8 .5L1 8l7 7.500M15 .5L8 8l7 7.500" /></svg>
);

function VerticalFit({ className, children }: { className: string; children: string }) {
  const box = useRef<HTMLSpanElement>(null);
  const inner = useRef<HTMLSpanElement>(null);
  const [scale, setScale] = useState(1);
  useLayoutEffect(() => {
    if (box.current && inner.current && inner.current.offsetHeight) {
      setScale(box.current.clientHeight / inner.current.offsetHeight);
    }
  }, [children]);
  return (
    <span ref={box} className={`block text-[17.5px] leading-6 font-semibold text-[#252423] ${className}`}>
      <span ref={inner} className="inline-block origin-top whitespace-nowrap" style={{ transform: `scaleY(${scale})` }}>{children}</span>
    </span>
  );
}

function Pane({ className, label, lw, shift, children }: { className: string; label: string; lw: string; shift: string; children?: ReactNode }) {
  return (
    <aside className={`flex shrink-0 flex-col ${className}`}>
      <Expand />
      {children}
      <div className={`flex w-6 [writing-mode:vertical-rl] ${shift}`}>
        <VerticalFit className={lw}>{label}</VerticalFit>
      </div>
    </aside>
  );
}

export default function App() {
  return (
    <div className={`flex h-[976px] w-[1916px] flex-col overflow-hidden bg-[#f3f2f1] ${UI}`}>
      <Ribbon />
      <div className="flex h-[790px] shrink-0">
        <ViewNav />
        <div className="flex w-[1782px] shrink-0 flex-col">
          <main className="flex h-[746px] overflow-hidden bg-white">
            <div className="flex w-[1728px] shrink-0 overflow-hidden"><ReportPage /></div>
            <div className="h-[479px] w-[11px] shrink-0 rounded-full bg-[#c8c8c8]" />
            <Pane className="ml-[2px] w-[41px] border-l border-[#b3b0ad] bg-white pt-4 pl-[12px]" label="Filters" lw="h-[53px]" shift="-ml-[3px]">
              <svg viewBox="0 0 16 16" className="mt-[19px] mb-[10px] ml-[3px] size-4" fill="none" stroke="#252423" strokeWidth="1.300"><path d="M15 1v14h-2.500L7.500 10H1V6h6.500L12.500 1z" /></svg>
            </Pane>
          </main>
          <div className="flex h-[44px]">
            <div className="flex w-[49px] items-start justify-between pt-[15px] pr-[8px] pl-[7px]">
              <svg viewBox="0 0 6 12" className="h-3 w-[6px]" fill="#c8c6c4"><path d="M6 0v12L0 6z" /></svg>
              <svg viewBox="0 0 6 12" className="h-3 w-[6px]" fill="#c8c6c4"><path d="M0 0v12l6-6z" /></svg>
            </div>
            <div className="flex w-[95px] justify-center border-x border-b-[5px] border-x-[#a19f9d] border-b-[#117865] bg-white text-[15px] leading-[42px] text-[#252423]">
              <Fit className="w-[43px]">Page 1</Fit>
            </div>
            <div className="mt-[2px] flex h-10 w-[49px] items-center justify-center bg-[#117865]">
              <svg viewBox="0 0 14 14" className="size-[14px]" stroke="#fff" strokeWidth="4"><path d="M7 0v14M0 7h14" /></svg>
            </div>
          </div>
        </div>
        <Pane className="w-11 border-l border-[#e1dfdd] pt-[17px] pl-[14px]" label="Visualizations" lw="h-[123px]" shift="-ml-[6px]"><div className="h-[18px]" /></Pane>
        <Pane className="w-[39px] border-l border-[#e1dfdd] pt-[17px] pl-[13px]" label="Data" lw="h-[41px]" shift="-ml-[5px]"><div className="h-[18px]" /></Pane>
      </div>
      <footer className="flex h-[31px] shrink-0 items-center border-t border-b border-t-[#e1dfdd] border-b-[#4a403a] pl-[7px] text-[14.5px] leading-6 text-[#484644]">
        <Fit className="w-[73px]">Page 1 of 1</Fit>
        <span className="ml-[1564px] h-[2px] w-[6px] bg-[#605e5c]" />
        <div className="ml-[5px] flex h-[13px] w-[125px] items-center">
          <span className="h-px w-[60px] bg-[#605e5c]" />
          <span className="h-[13px] w-[5px] bg-[#605e5c]" />
          <span className="h-px w-[60px] bg-[#605e5c]" />
        </div>
        <svg viewBox="0 0 10 10" className="ml-[7px] size-[10px]" stroke="#605e5c" strokeWidth="1.800"><path d="M5 0v10M0 5h10" /></svg>
        <Fit className="ml-[18px] w-[36px] text-[#605e5c]">100%</Fit>
        <svg viewBox="0 0 20 15" className="ml-[20px] h-[15px] w-5" fill="none" stroke="#605e5c" strokeWidth="1.300">
          <path d="M.8.8h18.400v13.400H.8z" strokeWidth="1.700" />
          <path d="M3.500 6V3.500h3M13.500 3.500h3V6M16.500 9v2.500h-3M6.500 11.500h-3V9" />
        </svg>
      </footer>
    </div>
  );
}
